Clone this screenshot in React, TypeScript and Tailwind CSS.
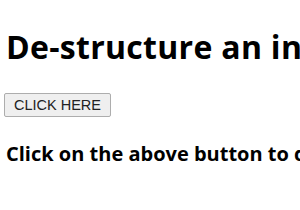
export default function App() {
  return (
    <div className="min-h-[210px] bg-white px-[6px] text-black" style={{ fontFamily: '"Open Sans", "Noto Sans", sans-serif' }}>
      <h1 className="whitespace-nowrap pt-[26px] text-[32px] font-bold leading-[42px] tracking-[0.3px]">De-structure an into object properties</h1>
      <div className="mt-[24px]">
        <button className="-ml-[2px] h-[24px] w-[107px] rounded-[2px] border border-[#adadad] bg-[#efefef] text-[14.5px] leading-none text-[#222]" style={{ fontFamily: '"Liberation Sans", Arial, sans-serif' }}>CLICK HERE</button>
      </div>
      <p className="mt-[23px] whitespace-nowrap text-[20px] font-bold leading-[28px]">Click on the above button to de-structure</p>
    </div>
  );
}
